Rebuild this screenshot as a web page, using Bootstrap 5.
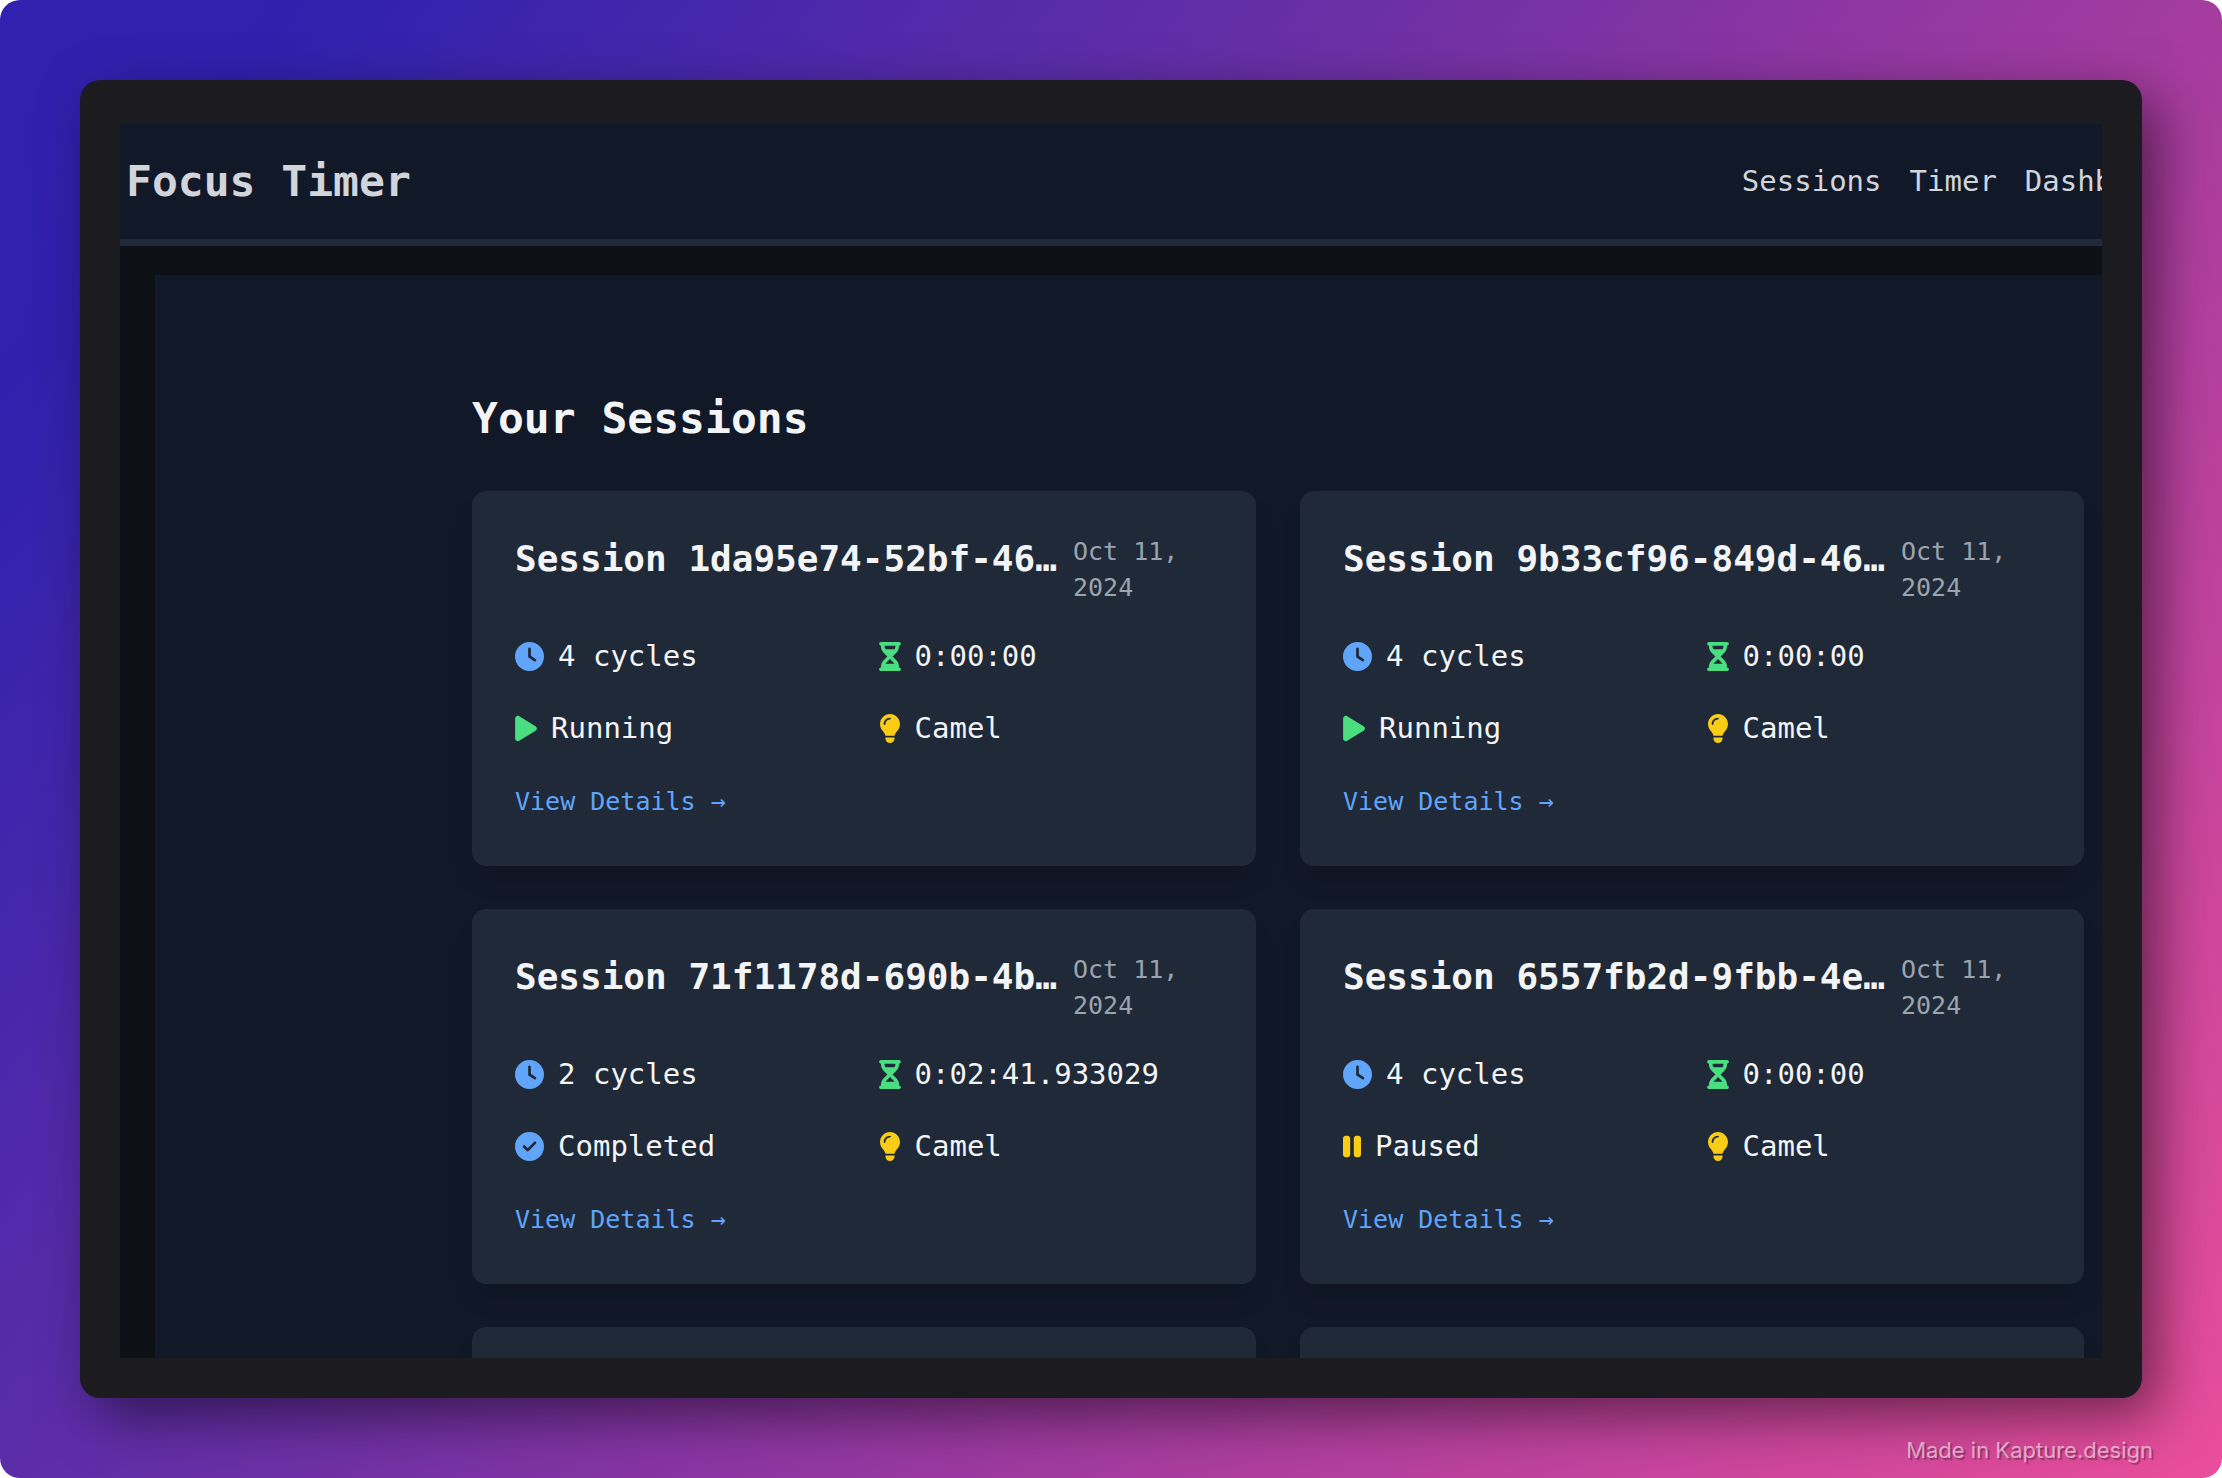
<!DOCTYPE html>
<html lang="en">
<head>
<meta charset="utf-8">
<meta name="viewport" content="width=device-width, initial-scale=1">
<title>Focus Timer</title>
<link href="https://cdn.jsdelivr.net/npm/bootstrap@5.3.0/dist/css/bootstrap.min.css" rel="stylesheet">
<style>
  body { background: #fff; font-family: "DejaVu Sans Mono", monospace; font-size: 29px; line-height: 43px; color: #f3f4f6; }
  .stage { padding: 80px 80px 0; border-radius: 20px; background: linear-gradient(127deg, #3320b0 0%, #2f21ae 9%, #5b2ca9 33%, #6d30a5 42%, #8a35a3 54%, #a63c9f 67%, #ea4e9b 100%); }
  .bezel { min-height: 0; padding: 44px 40px 40px; border-radius: 20px; background: #1c1b1f; box-shadow: 16px 18px 54px rgba(0, 0, 0, .5); }
  .screen { background: #0d1014; }
  .topbar { padding: 28px 0 29px 6px; margin-right: -80px; background: #111827; border-bottom: 7px solid #1f2937; }
  .topbar a { color: #d1d5db; text-decoration: none; }
  .brand, .page-title { font-size: 43px; line-height: 58px; font-weight: 700; }
  .menu { gap: 28px; }
  .sessions { margin: 29px 0 0 35px; padding: 114px 18px 0 317px; background: #111827; }
  .page-title { margin-bottom: 44px; }
  .session-grid { display: grid; grid-template-columns: 1fr 1fr; gap: 43px 44px; }
  .session { min-height: 374px; padding: 43px; border-radius: 14px; background: #1f2937; box-shadow: 0 18px 27px -5px rgba(0, 0, 0, .12); }
  .session-head { gap: 14px; margin-bottom: 29px; }
  .session-head h2 { font-size: 36px; line-height: 50px; font-weight: 700; min-width: 0; }
  .session-head time { flex: 0 0 140px; font-size: 25px; line-height: 36px; color: #9ca3af; }
  .facts { display: grid; grid-template-columns: 1fr 1fr; gap: 29px; margin-bottom: 29px; }
  .facts li { display: flex; align-items: center; gap: 14px; }
  .facts svg { height: 29px; fill: currentColor; }
  .blue { color: #60a5fa; } .green { color: #4ade80; } .yellow { color: #facc15; }
  .details { font-size: 25px; color: #60a5fa; text-decoration: none; }
  .credit { height: 80px; padding: 36px 69px 0 0; margin-right: -80px; font: 22px/32px Inter, sans-serif; color: rgba(255, 255, 255, .55); text-shadow: 2px 2px 1px rgba(0, 0, 0, .3); }
</style>
</head>
<body>
<svg class="d-none" aria-hidden="true">
  <symbol id="clock" viewBox="0 0 512 512"><path d="M256 0a256 256 0 1 1 0 512A256 256 0 1 1 256 0zM232 120V256c0 8 4 15.5 10.7 20l96 64c11 7.4 25.9 4.4 33.3-6.7s4.4-25.9-6.7-33.3L280 243.2V120c0-13.3-10.7-24-24-24s-24 10.7-24 24z"/></symbol>
  <symbol id="check" viewBox="0 0 512 512"><path d="M256 512A256 256 0 1 0 256 0a256 256 0 1 0 0 512zM369 209L241 337c-9.4 9.4-24.6 9.4-33.9 0l-64-64c-9.4-9.4-9.4-24.6 0-33.9s24.6-9.4 33.9 0l47 47L335 175c9.4-9.4 24.6-9.4 33.9 0s9.4 24.6 0 33.9z"/></symbol>
  <symbol id="play" viewBox="0 0 384 512"><path d="M73 39c-14.8-9.1-33.4-9.4-48.5-.9S0 62.6 0 80V432c0 17.4 9.4 33.4 24.5 41.9s33.7 8.1 48.5-.9L361 297c14.3-8.7 23-24.2 23-41s-8.7-32.2-23-41L73 39z"/></symbol>
  <symbol id="pause" viewBox="0 0 320 512"><path d="M48 64C21.5 64 0 85.5 0 112V400c0 26.5 21.5 48 48 48H80c26.5 0 48-21.5 48-48V112c0-26.5-21.5-48-48-48H48zm192 0c-26.5 0-48 21.5-48 48V400c0 26.5 21.5 48 48 48h32c26.5 0 48-21.5 48-48V112c0-26.5-21.5-48-48-48H240z"/></symbol>
  <symbol id="glass" viewBox="0 0 384 512"><path d="M32 0C14.3 0 0 14.3 0 32S14.3 64 32 64V75c0 42.4 16.9 83.1 46.9 113.1L146.7 256 78.9 323.9C48.9 353.9 32 394.6 32 437v11c-17.7 0-32 14.3-32 32s14.3 32 32 32H352c17.7 0 32-14.3 32-32s-14.3-32-32-32V437c0-42.4-16.9-83.1-46.9-113.1L237.3 256l67.9-67.9c30-30 46.9-70.7 46.9-113.1V64c17.7 0 32-14.3 32-32s-14.3-32-32-32H32zM96 75V64H288V75c0 19-5.6 37.4-16 53H112c-10.3-15.6-16-34-16-53zm16 309c3.5-5.3 7.6-10.3 12.1-14.9L192 301.3l67.9 67.9c4.6 4.6 8.6 9.6 12.1 14.9H112z"/></symbol>
  <symbol id="bulb" viewBox="0 0 384 512"><path d="M272 384c9.6-31.9 29.5-59.1 49.2-86.2c5.2-7.1 10.4-14.2 15.4-21.4c19.8-28.5 31.4-63 31.4-100.3C368 78.8 289.2 0 192 0S16 78.8 16 176c0 37.3 11.6 71.9 31.4 100.3c5 7.2 10.2 14.3 15.4 21.4c19.8 27.1 39.7 54.4 49.2 86.2H272zM192 512c44.2 0 80-35.8 80-80V416H112v16c0 44.2 35.8 80 80 80zM112 176c0 8.8-7.2 16-16 16s-16-7.2-16-16c0-61.9 50.1-112 112-112c8.8 0 16 7.2 16 16s-7.2 16-16 16c-44.2 0-80 35.8-80 80z"/></symbol>
</svg>
<div class="stage vh-100 d-flex flex-column overflow-hidden">
  <div class="bezel flex-grow-1 d-flex">
    <div class="screen flex-grow-1 overflow-hidden">
      <header class="topbar d-flex align-items-center justify-content-between">
        <a class="brand" href="#">Focus Timer</a>
        <nav class="menu d-flex"><a href="#">Sessions</a><a href="#">Timer</a><a href="#">Dashboard</a></nav>
      </header>
      <main class="sessions">
        <h1 class="page-title">Your Sessions</h1>
        <div class="session-grid">
          <article class="session">
            <div class="session-head d-flex justify-content-between"><h2 class="flex-grow-1 text-truncate m-0">Session 1da95e74-52bf-46…</h2><time datetime="2024-10-11">Oct 11, 2024</time></div>
            <ul class="facts list-unstyled">
              <li><svg class="blue" width="29"><use href="#clock"/></svg>4 cycles</li>
              <li><svg class="green" width="22"><use href="#glass"/></svg>0:00:00</li>
              <li><svg class="green" width="22"><use href="#play"/></svg>Running</li>
              <li><svg class="yellow" width="22"><use href="#bulb"/></svg>Camel</li>
            </ul>
            <a class="details" href="#">View Details →</a>
          </article>
          <article class="session">
            <div class="session-head d-flex justify-content-between"><h2 class="flex-grow-1 text-truncate m-0">Session 9b33cf96-849d-46…</h2><time datetime="2024-10-11">Oct 11, 2024</time></div>
            <ul class="facts list-unstyled">
              <li><svg class="blue" width="29"><use href="#clock"/></svg>4 cycles</li>
              <li><svg class="green" width="22"><use href="#glass"/></svg>0:00:00</li>
              <li><svg class="green" width="22"><use href="#play"/></svg>Running</li>
              <li><svg class="yellow" width="22"><use href="#bulb"/></svg>Camel</li>
            </ul>
            <a class="details" href="#">View Details →</a>
          </article>
          <article class="session">
            <div class="session-head d-flex justify-content-between"><h2 class="flex-grow-1 text-truncate m-0">Session 71f1178d-690b-4b…</h2><time datetime="2024-10-11">Oct 11, 2024</time></div>
            <ul class="facts list-unstyled">
              <li><svg class="blue" width="29"><use href="#clock"/></svg>2 cycles</li>
              <li><svg class="green" width="22"><use href="#glass"/></svg>0:02:41.933029</li>
              <li><svg class="blue" width="29"><use href="#check"/></svg>Completed</li>
              <li><svg class="yellow" width="22"><use href="#bulb"/></svg>Camel</li>
            </ul>
            <a class="details" href="#">View Details →</a>
          </article>
          <article class="session">
            <div class="session-head d-flex justify-content-between"><h2 class="flex-grow-1 text-truncate m-0">Session 6557fb2d-9fbb-4e…</h2><time datetime="2024-10-11">Oct 11, 2024</time></div>
            <ul class="facts list-unstyled">
              <li><svg class="blue" width="29"><use href="#clock"/></svg>4 cycles</li>
              <li><svg class="green" width="22"><use href="#glass"/></svg>0:00:00</li>
              <li><svg class="yellow" width="18"><use href="#pause"/></svg>Paused</li>
              <li><svg class="yellow" width="22"><use href="#bulb"/></svg>Camel</li>
            </ul>
            <a class="details" href="#">View Details →</a>
          </article>
          <article class="session"></article>
          <article class="session"></article>
        </div>
      </main>
    </div>
  </div>
  <footer class="credit flex-shrink-0 text-end">Made in Kapture.design</footer>
</div>
<script src="https://cdn.jsdelivr.net/npm/bootstrap@5.3.0/dist/js/bootstrap.bundle.min.js"></script>
</body>
</html>
